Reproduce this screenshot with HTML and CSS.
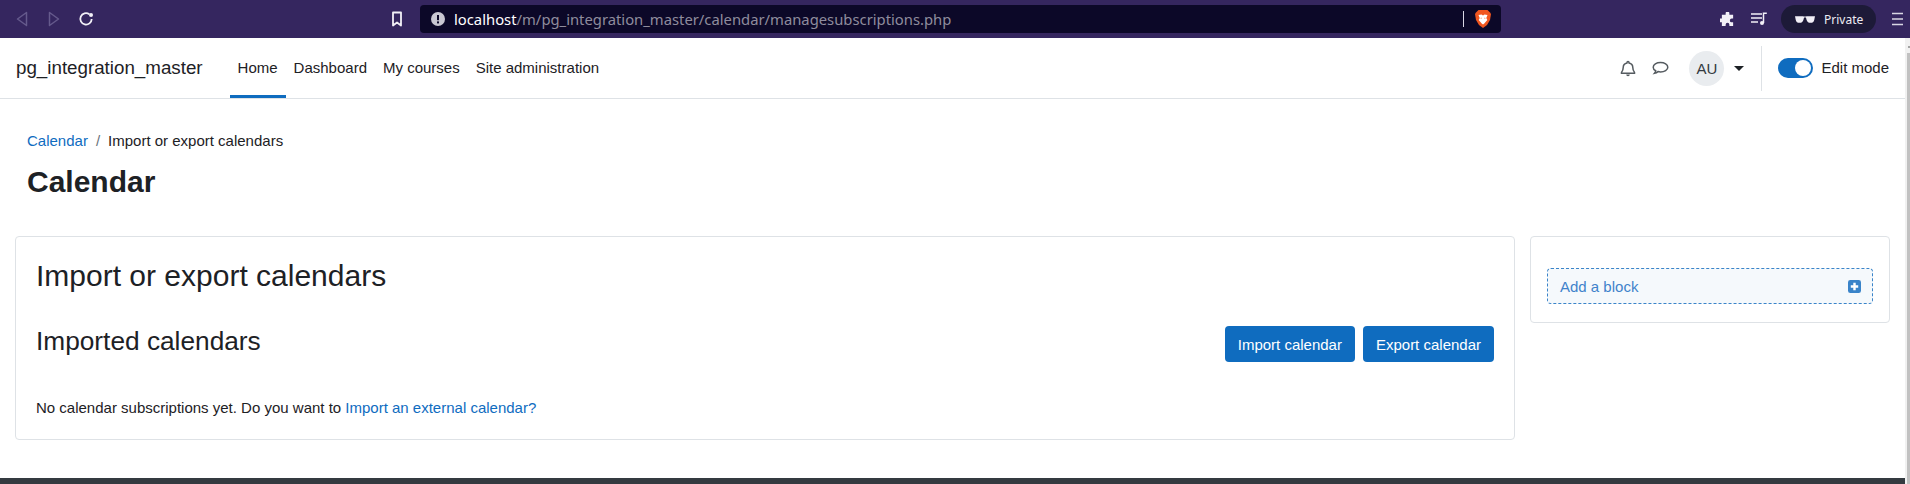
FILE: index.html
```html
<!DOCTYPE html>
<html lang="en">
<head>
<meta charset="utf-8">
<title>Import or export calendars</title>
<link rel="stylesheet" href="styles.css">
</head>
<body>
<header class="chrome">
  <div class="chrome-left">
    <svg class="ic" width="18" height="18" viewBox="0 0 18 18"><path d="M13.500 2.500 4.500 9l9 6.500z" fill="none" stroke="#655a8c" stroke-width="1.500" stroke-linejoin="round"/></svg>
    <svg class="ic" width="18" height="18" viewBox="0 0 18 18"><path d="M4.500 2.500 13.500 9l-9 6.500z" fill="none" stroke="#655a8c" stroke-width="1.500" stroke-linejoin="round"/></svg>
    <svg class="ic" width="18" height="18" viewBox="0 0 18 18"><path d="M12.300 4.200A5.700 5.700 0 1 0 14.700 9" fill="none" stroke="#f2f0f7" stroke-width="1.800"/><circle cx="14" cy="5" r="2" fill="#f2f0f7"/></svg>
  </div>
  <svg class="bookmark" width="14" height="16" viewBox="0 0 14 16"><path d="M3 1.500h8v13l-4-3-4 3z" fill="none" stroke="#f2f0f7" stroke-width="1.800" stroke-linejoin="round"/></svg>
  <div class="urlbar">
    <svg class="warn" width="14" height="14" viewBox="0 0 14 14"><circle cx="7" cy="7" r="7" fill="#c9c7d2"/><rect x="6" y="3" width="2" height="5.200" fill="#0c0828"/><rect x="6" y="9.400" width="2" height="2" fill="#0c0828"/></svg>
    <span class="url"><span class="host">localhost</span>/m/pg_integration_master/calendar/managesubscriptions.php</span>
    <span class="url-sep"></span>
    <svg class="brave" width="16" height="18" viewBox="0 0 16 18"><path d="M3.500 0h9L15 2.500l1 1.500-1 6-3 5-4 3-4-3-3-5-1-6 1-1.500z" fill="#f1561f"/><path d="M3.500 5 6.500 4.500 8 5.500l1.500-1 3 .5-1.200 3 1 2-3 3.500L8 14.500 6.700 13.500l-3-3.500 1-2zM6 7.500l1 .8-1.500.4zM10 7.500l-1 .8 1.500.4z" fill="#fff" fill-rule="evenodd"/></svg>
  </div>
  <div class="chrome-right">
    <svg class="puzzle" width="15" height="15" viewBox="0 0 16 16"><path d="M6 1.500a2 2 0 0 1 4 0V3h4v4h-1.500a2 2 0 0 0 0 4H14v4h-4v-1.500a2 2 0 0 0-4 0V15H2v-4H.5a2 2 0 0 1 0-4H2V3h4z" fill="#f2f0f7"/></svg>
    <svg width="16" height="14" viewBox="0 0 16 14"><path d="M0 2h11M0 6h11M0 10h7" stroke="#f2f0f7" stroke-width="1.500"/><path d="M12.500 11V1.200h3.300" fill="none" stroke="#f2f0f7" stroke-width="1.500"/><circle cx="11" cy="11" r="2" fill="#f2f0f7"/></svg>
    <div class="private">
      <svg width="20" height="9" viewBox="0 0 21 9"><path d="M0 1h8.500q1 .6 4 0H21l-.8 4q-.6 3-4 3-3 0-4-3l-.7-2.500h-2L8.800 5q-1 3-4 3-3.400 0-4-3z" fill="#f2f0f7"/></svg>
      <span>Private</span>
    </div>
    <svg width="11" height="14" viewBox="0 0 11 14"><path d="M0 1.500h11M0 7h11M0 12.500h11" stroke="#d9d6e4" stroke-width="1.700"/></svg>
  </div>
</header>

<div class="viewport">
  <div class="page">
    <nav class="navbar">
      <a class="brand">pg_integration_master</a>
      <ul class="nav-links">
        <li class="active">Home</li>
        <li>Dashboard</li>
        <li>My courses</li>
        <li>Site administration</li>
      </ul>
      <div class="nav-tools">
        <svg class="tool" width="16" height="17" viewBox="0 0 16 17"><path d="M8 1.500a1 1 0 0 1 1 1v.4c2.300.5 3.800 2.300 3.800 4.600 0 2.800.8 3.800 1.700 4.900v.8H1.500v-.8c.9-1.100 1.700-2.100 1.700-4.900 0-2.300 1.500-4.100 3.800-4.600v-.4a1 1 0 0 1 1-1z" fill="none" stroke="#555b60" stroke-width="1.500"/><path d="M6.200 14.500a1.800 1.800 0 0 0 3.600 0z" fill="#555b60"/></svg>
        <svg class="tool chat" width="17" height="15" viewBox="0 0 17 15"><path d="M8.500 1.500c4 0 7.300 2 7.300 4.700s-3.300 4.700-7.300 4.700c-.9 0-1.700-.1-2.500-.3-1 .9-2.300 1.500-3.500 1.700.7-.8 1.100-1.700 1.200-2.600C2 8.900 1.200 7.600 1.200 6.200c0-2.700 3.300-4.700 7.300-4.700z" fill="none" stroke="#555b60" stroke-width="1.500"/></svg>
        <div class="avatar">AU</div>
        <span class="caret"></span>
        <div class="edit">
          <span class="switch"><span class="knob"></span></span>
          <span>Edit mode</span>
        </div>
      </div>
    </nav>

    <main class="content">
      <div class="crumbs"><a>Calendar</a><span class="slash">/</span><span>Import or export calendars</span></div>
      <h1>Calendar</h1>
      <div class="columns">
        <section class="card main-card">
          <h2>Import or export calendars</h2>
          <div class="sub-row">
            <h3>Imported calendars</h3>
            <div class="btns">
              <button class="btn">Import calendar</button>
              <button class="btn">Export calendar</button>
            </div>
          </div>
          <p class="note">No calendar subscriptions yet. Do you want to <a>Import an external calendar?</a></p>
        </section>
        <aside class="card side-card">
          <div class="add-block">
            <span>Add a block</span>
            <svg width="13" height="13" viewBox="0 0 14 14"><rect width="14" height="14" rx="2.500" fill="#3a84c9"/><path d="M7 3v8M3 7h8" stroke="#fff" stroke-width="2.600"/></svg>
          </div>
        </aside>
      </div>
    </main>
    <footer class="footer"></footer>
  </div>
  <div class="scrollbar"><span class="arrow"></span><span class="thumb"></span></div>
</div>
</body>
</html>
```

FILE: styles.css
```css
* { box-sizing: border-box; }
html, body { margin: 0; height: 484px; overflow: hidden; background: #fff; }
body { font-family: "Liberation Sans", Arial, sans-serif; font-size: 15px; color: #1d2125; }

.chrome { height: 38px; background: #35265f; display: flex; align-items: center; }
.chrome-left { display: flex; align-items: center; gap: 14px; padding-left: 13px; width: 391px; }
.bookmark { margin-right: 16px; margin-left: -1px; }
.urlbar { width: 1081px; height: 28px; background: #0c0828; border-radius: 4px; display: flex; align-items: center; padding: 0 10px 0 11px; }
.warn { margin-right: 9px; flex: none; }
.url { font-family: "Noto Sans", sans-serif; font-size: 14.800px; color: #8f8c9d; flex: 1; }
.host { color: #fff; }
.url-sep { width: 1px; height: 16px; background: #d9d6e4; margin-right: 11px; }
.brave { flex: none; }
.chrome-right { flex: 1; display: flex; align-items: center; justify-content: flex-end; gap: 14px; padding-right: 7px; }
.puzzle { margin-right: 2px; }
.private { display: flex; align-items: center; gap: 9px; height: 28px; width: 95px; padding-left: 14px; border-radius: 14px; background: #1d1a38; color: #eeedf3; font-family: "Noto Sans", sans-serif; font-size: 12px; margin-right: 2px; }

.viewport { display: flex; height: 446px; }
.page { flex: 1; min-width: 0; display: flex; flex-direction: column; overflow: hidden; }
.scrollbar { width: 5px; flex: none; background: #f1f1f1; padding: 8px 0 0 2px; display: flex; flex-direction: column; }
.arrow { display: block; width: 2px; height: 2px; margin: 0 0 5px 1px; background: #a3a3a3; }
.thumb { display: block; flex: 1; background: #c1c1c1; }

.navbar { height: 61px; flex: none; display: flex; align-items: stretch; border-bottom: 1px solid #dee2e6; padding-left: 16px; }
.brand { font-size: 18.750px; line-height: 60px; color: #1d2125; margin-right: 27px; }
.nav-links { list-style: none; display: flex; margin: 0; padding: 0; }
.nav-links li { line-height: 60px; padding: 0 8px; color: #1d2125; }
.nav-links li.active { border-bottom: 3px solid #0f6cbf; height: 60px; }
.nav-tools { margin-left: auto; display: flex; align-items: center; }
.chat { margin-left: 16px; }
.avatar { width: 35px; height: 35px; border-radius: 50%; background: #e9ecef; color: #343a40; text-align: center; line-height: 35px; font-size: 15px; margin-left: 20px; }
.caret { width: 0; height: 0; border: 5px solid transparent; border-top-color: #1d2125; border-bottom-width: 0; margin-left: 10px; }
.edit { display: flex; align-items: center; gap: 8px; height: 45px; line-height: 20px; margin-left: 17px; padding: 0 16px; border-left: 1px solid #dee2e6; }
.switch { width: 35px; height: 20px; border-radius: 10px; background: #0f6cbf; display: flex; justify-content: flex-end; align-items: center; padding-right: 2px; }
.knob { width: 16px; height: 16px; border-radius: 50%; background: #fff; }

.content { flex: 1; padding: 0 16px; }
.crumbs { margin: 31px 0 0 11px; line-height: 22px; height: 22px; display: flex; }
.crumbs a { color: #0f6cbf; }
.slash { color: #6a737b; padding: 0 8px; }
h1 { font-size: 30px; font-weight: 700; line-height: 36px; margin: 12px 0 0 11px; color: #1d2125; }
.columns { display: flex; gap: 15px; align-items: flex-start; margin: 36px -1px 0 -1px; }
.card { background: #fff; border: 1px solid #dee2e6; border-radius: 4px; flex: none; }
.main-card { width: 1500px; height: 204px; padding: 21px 20px 0; }
.side-card { width: 360px; height: 87px; padding: 31px 16px 0; }
h2 { font-size: 30px; font-weight: 400; line-height: 36px; margin: 0; }
.sub-row { display: flex; justify-content: space-between; margin-top: 32px; }
h3 { font-size: 26.250px; font-weight: 400; line-height: 31px; margin: 0; }
.btns { display: flex; gap: 8px; margin: 0; }
.btn { height: 36px; padding: 0 13px; border: 0; border-radius: 4px; background: #0f6cbf; color: #fff; font: inherit; }
.note { margin: 35px 0 0; line-height: 22px; }
.note a { color: #0f6cbf; }
.add-block { height: 36px; display: flex; align-items: center; justify-content: space-between; padding: 0 11px 0 12px; border: 1px dashed #3a84c9; border-radius: 4px; background: #f5f9fc; color: #3f83cb; }
.footer { height: 6px; flex: none; background: #343a40; margin-top: auto; }
```
